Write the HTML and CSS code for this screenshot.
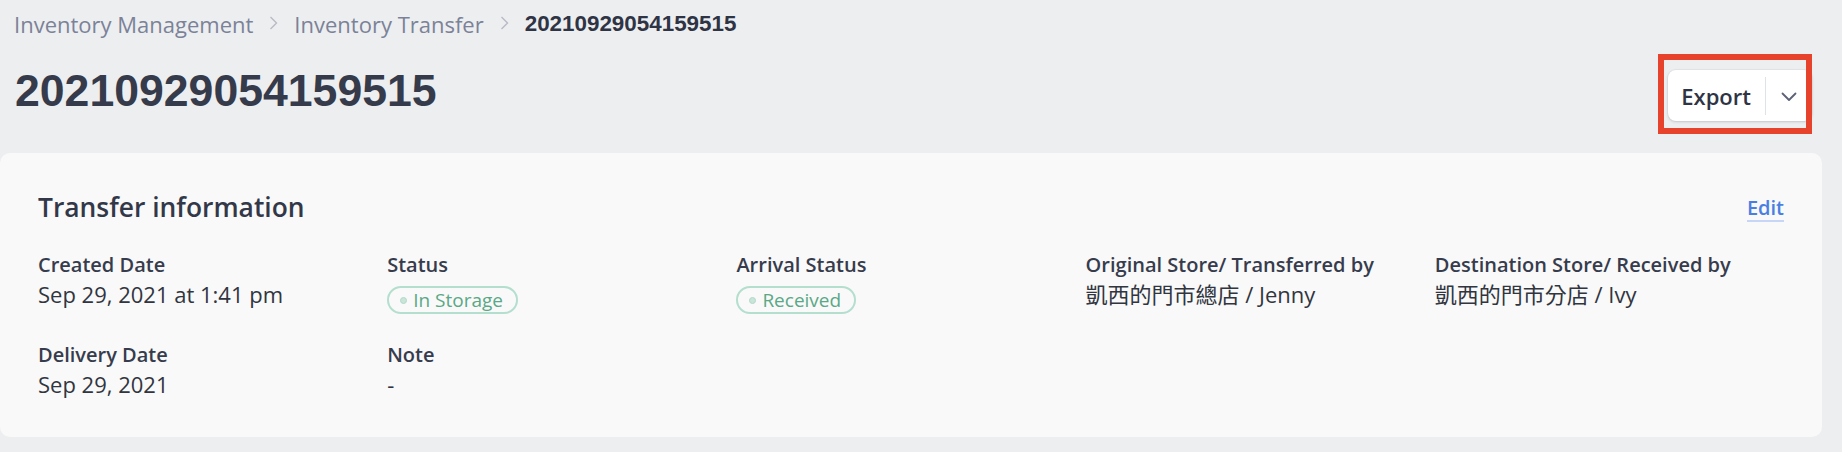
FILE: index.html
```html
<!DOCTYPE html>
<html lang="en">
<head>
<meta charset="utf-8">
<title>20210929054159515</title>
<link rel="stylesheet" href="styles.css">
</head>
<body>
  <nav class="breadcrumb">
    <span class="crumb">Inventory Management</span>
    <svg class="sep" width="9" height="14" viewBox="0 0 9 14"><path d="M1.5 1 L7.5 7 L1.5 13" fill="none" stroke="#b7bbc7" stroke-width="1.4"/></svg>
    <span class="crumb">Inventory Transfer</span>
    <svg class="sep" width="9" height="14" viewBox="0 0 9 14"><path d="M1.5 1 L7.5 7 L1.5 13" fill="none" stroke="#b7bbc7" stroke-width="1.4"/></svg>
    <span class="crumb current">20210929054159515</span>
  </nav>

  <header class="page-head">
    <h1 class="page-title">20210929054159515</h1>
    <div class="export-wrap">
      <div class="export-btn">
        <span class="export-label">Export</span>
        <span class="export-divider"></span>
        <span class="export-caret">
          <svg width="16" height="10" viewBox="0 0 16 10"><path d="M1.5 1.5 L8 8 L14.5 1.5" fill="none" stroke="#5b6276" stroke-width="1.8" stroke-linecap="round" stroke-linejoin="round"/></svg>
        </span>
      </div>
      <div class="annotation"></div>
    </div>
  </header>

  <section class="card">
    <div class="card-head">
      <h2 class="card-title">Transfer information</h2>
      <a class="edit-link">Edit</a>
    </div>
    <div class="info-grid">
      <div class="field">
        <div class="label">Created Date</div>
        <div class="value">Sep 29, 2021 at 1:41 pm</div>
      </div>
      <div class="field">
        <div class="label">Status</div>
        <div class="value"><span class="badge"><span class="dot"></span>In Storage</span></div>
      </div>
      <div class="field">
        <div class="label">Arrival Status</div>
        <div class="value"><span class="badge"><span class="dot"></span>Received</span></div>
      </div>
      <div class="field">
        <div class="label">Original Store/ Transferred by</div>
        <div class="value">凱西的門市總店 / Jenny</div>
      </div>
      <div class="field">
        <div class="label">Destination Store/ Received by</div>
        <div class="value">凱西的門市分店 / Ivy</div>
      </div>
      <div class="field">
        <div class="label">Delivery Date</div>
        <div class="value">Sep 29, 2021</div>
      </div>
      <div class="field">
        <div class="label">Note</div>
        <div class="value">-</div>
      </div>
    </div>
  </section>
</body>
</html>
```

FILE: styles.css
```css
* { box-sizing: border-box; }

html, body {
  margin: 0;
  padding: 0;
}

body {
  background: #edeef0;
  font-family: "Open Sans", "Noto Sans CJK TC", sans-serif;
  color: #333846;
  width: 1842px;
  height: 452px;
  overflow: hidden;
}

.breadcrumb {
  display: flex;
  align-items: center;
  padding: 9px 0 0 14px;
  height: 39px;
  font-size: 22px;
  line-height: 30px;
  color: #7b8298;
}

.sep {
  margin: 0 16px 0 16px;
  position: relative;
  top: -1px;
}

.crumb.current {
  font-family: "Liberation Sans", Arial, sans-serif;
  font-weight: 700;
  font-size: 22.4px;
  color: #2f3445;
}

.page-head {
  display: flex;
  justify-content: space-between;
  align-items: flex-start;
  padding: 0 32px 0 15px;
  margin-top: 27px;
  margin-bottom: 32px;
}

.page-title {
  margin: 0;
  font-family: "Liberation Sans", Arial, sans-serif;
  font-weight: 700;
  font-size: 44.6px;
  line-height: 50px;
  color: #363b4b;
}

.export-wrap {
  position: relative;
  margin-top: 4px;
  margin-right: -2px;
}

.export-btn {
  display: flex;
  align-items: stretch;
  height: 51px;
  background: #ffffff;
  border-radius: 8px;
  box-shadow: 0 1px 3px rgba(40, 45, 60, 0.18), 0 0 0 1px rgba(40, 45, 60, 0.03);
}

.export-label {
  display: flex;
  align-items: center;
  padding: 0 14px 0 13px;
  font-size: 22px;
  font-weight: 600;
  color: #2f3445;
}

.export-divider {
  width: 1px;
  background: #e1e2e6;
  margin: 7px 0 6px;
}

.export-caret {
  display: flex;
  align-items: center;
  justify-content: center;
  width: 46px;
  padding-top: 2px;
}

.annotation {
  position: absolute;
  left: -10px;
  top: -16px;
  width: 154px;
  height: 80px;
  border: 6px solid #e7432c;
  pointer-events: none;
}

.card {
  background: #f9f9f9;
  margin: 0 20px 0 0;
  border-radius: 10px;
  padding: 36px 38px 38px;
}

.card-head {
  display: flex;
  justify-content: space-between;
  align-items: flex-start;
  margin-bottom: 26px;
}

.card-title {
  margin: 0;
  font-size: 26.4px;
  font-weight: 600;
  line-height: 36px;
  color: #333849;
}

.edit-link {
  margin-top: 6px;
  font-size: 20px;
  font-weight: 600;
  line-height: 25px;
  color: #4a7fe2;
  border-bottom: 2px solid #c7d6f6;
}

.info-grid {
  display: grid;
  grid-template-columns: repeat(5, 1fr);
  row-gap: 27px;
}

.label {
  font-size: 20px;
  font-weight: 600;
  line-height: 28px;
  color: #373c4d;
}

.value {
  font-size: 22px;
  line-height: 30px;
  color: #31353f;
  min-height: 30px;
}

.badge {
  display: inline-flex;
  align-items: center;
  height: 28px;
  margin-top: 7px;
  padding: 0 13px 0 11px;
  border: 2px solid #b4dfce;
  border-radius: 14px;
  font-size: 19px;
  line-height: 24px;
  color: #5aa886;
  vertical-align: top;
}

.dot {
  width: 7px;
  height: 7px;
  border-radius: 50%;
  background: #c9e5da;
  border: 1px solid #b2d8c9;
  margin-right: 6px;
}
```
